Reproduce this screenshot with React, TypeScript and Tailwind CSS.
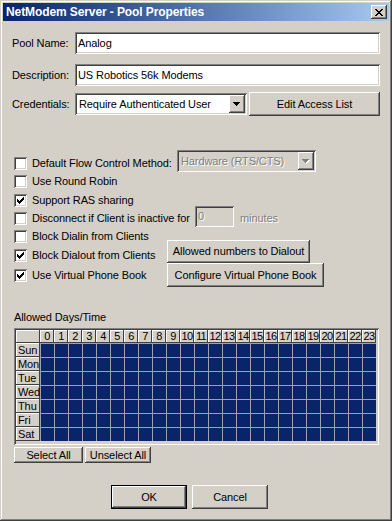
import React from "react";

const sunken =
  "shadow-[inset_1px_1px_0_#808080,inset_-1px_-1px_0_#ffffff,inset_2px_2px_0_#404040,inset_-2px_-2px_0_#d4d0c8]";
const raised =
  "shadow-[inset_-1px_-1px_0_#404040,inset_1px_1px_0_#ffffff,inset_-2px_-2px_0_#808080,inset_2px_2px_0_#d4d0c8]";

function Check({ checked }: { checked?: boolean }) {
  return (
    <div className={`relative w-[13px] h-[13px] shrink-0 bg-white ${sunken}`}>
      {checked && (
        <svg className="absolute left-0 top-0" width="13" height="13" viewBox="0 0 13 13" shapeRendering="crispEdges">
          <path
            d="M3 5h1v3H3z M4 6h1v3H4z M5 7h1v3H5z M6 6h1v3H6z M7 5h1v3H7z M8 4h1v3H8z M9 3h1v3H9z"
            fill="#000"
          />
        </svg>
      )}
    </div>
  );
}

function Arrow({ disabled }: { disabled?: boolean }) {
  const d = "M0 0h7v1H0z M1 1h5v1H1z M2 2h3v1H2z M3 3h1v1H3z";
  return (
    <svg width="8" height="5" viewBox="0 0 8 5" shapeRendering="crispEdges">
      {disabled && <path d={d} fill="#ffffff" transform="translate(1 1)" />}
      <path d={d} fill={disabled ? "#808080" : "#000"} />
    </svg>
  );
}

function Btn({
  children,
  className = "",
}: {
  children: React.ReactNode;
  className?: string;
}) {
  return (
    <div className={`flex items-center justify-center whitespace-nowrap bg-[#d4d0c8] ${raised} ${className}`}>
      {children}
    </div>
  );
}

const hours = Array.from({ length: 24 }, (_, i) => i);
const days = ["Sun", "Mon", "Tue", "Wed", "Thu", "Fri", "Sat"];

export default function App() {
  return (
    <div
      className="w-[392px] h-[521px] bg-[#d4d0c8] p-[3px] flex flex-col text-[11px] leading-[13px] tracking-[-0.1px] text-black font-['Liberation_Sans',Arial,sans-serif] shadow-[inset_-1px_-1px_0_#404040,inset_1px_1px_0_#d4d0c8,inset_-2px_-2px_0_#808080,inset_2px_2px_0_#ffffff]"
    >
      {/* Title bar */}
      <div className="h-[18px] flex items-center justify-between pl-[3px] pr-[2px] bg-linear-to-r from-[#0a246a] to-[#a6caf0]">
        <span className="text-white font-bold text-[12px] tracking-[-0.1px]">
          NetModem Server - Pool Properties
        </span>
        <div className={`w-[16px] h-[14px] flex items-center justify-center bg-[#d4d0c8] ${raised}`}>
          <svg width="8" height="7" viewBox="0 0 8 7" shapeRendering="crispEdges">
            <path
              d="M0 0h2v1H0z M6 0h2v1H6z M1 1h2v1H1z M5 1h2v1H5z M2 2h4v1H2z M3 3h2v1H3z M2 4h4v1H2z M1 5h2v1H1z M5 5h2v1H5z M0 6h2v1H0z M6 6h2v1H6z"
              fill="#000"
            />
          </svg>
        </div>
      </div>

      <div className="flex flex-col pl-[9px]">
        {/* Pool name */}
        <div className="mt-[11px] flex items-center h-[22px]">
          <span className="w-[63px]">Pool Name:</span>
          <div className={`w-[305px] h-[22px] bg-white flex items-center pl-[3px] ${sunken}`}>Analog</div>
        </div>
        {/* Description */}
        <div className="mt-[10px] flex items-center h-[22px]">
          <span className="w-[63px]">Description:</span>
          <div className={`w-[305px] h-[22px] bg-white flex items-center pl-[3px] ${sunken}`}>
            US Robotics 56k Modems
          </div>
        </div>
        {/* Credentials */}
        <div className="mt-[6px] flex items-center h-[24px]">
          <span className="w-[63px]">Credentials:</span>
          <div className={`w-[172px] h-[22px] bg-white flex items-center p-[2px] ${sunken}`}>
            <span className="flex-1 pl-[2px] whitespace-nowrap overflow-hidden">Require Authenticated User</span>
            <div className={`w-[16px] h-[18px] shrink-0 flex items-center justify-center bg-[#d4d0c8] ${raised}`}>
              <Arrow />
            </div>
          </div>
          <Btn className="ml-[2px] w-[131px] h-[24px]">Edit Access List</Btn>
        </div>

        {/* Options */}
        <div className="mt-[38px] flex flex-col pl-[2px]">
          <div className="h-[18px] flex items-center">
            <Check />
            <span className="ml-[5px] w-[145px] whitespace-nowrap">Default Flow Control Method:</span>
            <div className={`self-start mt-[-4px] w-[139px] h-[22px] bg-[#d4d0c8] flex items-center p-[2px] ${sunken}`}>
              <span className="flex-1 pl-[2px] whitespace-nowrap text-[#808080] [text-shadow:1px_1px_0_#ffffff]">Hardware (RTS/CTS)</span>
              <div className={`w-[16px] h-[18px] shrink-0 flex items-center justify-center bg-[#d4d0c8] ${raised}`}>
                <Arrow disabled />
              </div>
            </div>
          </div>
          <div className="h-[19px] flex items-center">
            <Check />
            <span className="ml-[5px]">Use Round Robin</span>
          </div>
          <div className="h-[18px] flex items-center">
            <Check checked />
            <span className="ml-[5px]">Support RAS sharing</span>
          </div>
          <div className="h-[19px] flex items-center">
            <Check />
            <span className="ml-[5px] w-[163px] whitespace-nowrap">Disconnect if Client is inactive for</span>
            <div className={`self-start mt-[-3px] w-[39px] h-[21px] bg-[#d4d0c8] flex items-center pl-[3px] text-[#808080] [text-shadow:1px_1px_0_#ffffff] ${sunken}`}>
              0
            </div>
            <span className="ml-[6px] text-[#808080] [text-shadow:1px_1px_0_#ffffff]">minutes</span>
          </div>
          <div className="flex">
            <div className="w-[153px] flex flex-col">
              <div className="h-[17px] flex items-center">
                <Check />
                <span className="ml-[5px] whitespace-nowrap">Block Dialin from Clients</span>
              </div>
              <div className="h-[21px] flex items-center">
                <Check checked />
                <span className="ml-[5px] whitespace-nowrap">Block Dialout from Clients</span>
              </div>
              <div className="h-[18px] flex items-center">
                <Check checked />
                <span className="ml-[5px] whitespace-nowrap">Use Virtual Phone Book</span>
              </div>
            </div>
            <div className="flex flex-col items-start pt-[12px]">
              <Btn className="w-[143px] h-[23px]">Allowed numbers to Dialout</Btn>
              <Btn className="w-[157px] h-[24px]">Configure Virtual Phone Book</Btn>
            </div>
          </div>
        </div>

        {/* Allowed days/time */}
        <div className="mt-[24px] pl-[2px] h-[13px] flex items-center">Allowed Days/Time</div>
        <div className={`mt-[4px] ml-[2px] w-[365px] h-[117px] p-[2px] bg-[#d4d0c8] ${sunken}`}>
          <div className="grid grid-cols-[24px_repeat(24,14px)] grid-rows-[13px_repeat(7,14px)]">
            <div className="bg-[#d4d0c8] shadow-[inset_-1px_-1px_0_#404040,inset_1px_1px_0_#ffffff]" />
            {hours.map((h) => (
              <div
                key={h}
                className="bg-[#d4d0c8] flex items-center justify-center text-[11px] leading-[11px] tracking-[-0.6px] shadow-[inset_-1px_-1px_0_#404040,inset_1px_1px_0_#ffffff]"
              >
                {h}
              </div>
            ))}
            {days.map((d) => (
              <React.Fragment key={d}>
                <div className="bg-[#d4d0c8] flex items-center pl-[2px] shadow-[inset_-1px_-1px_0_#404040,inset_1px_1px_0_#ffffff]">
                  {d}
                </div>
                {hours.map((h) => (
                  <div key={h} className="bg-[#0a246a] border-l border-t border-[#a0a0a8]" />
                ))}
              </React.Fragment>
            ))}
          </div>
        </div>

        <div className="mt-[2px] ml-[2px] flex">
          <Btn className="w-[69px] h-[16px]">Select All</Btn>
          <Btn className="ml-[2px] w-[66px] h-[16px]">Unselect All</Btn>
        </div>

        <div className="mt-[22px] ml-[99px] flex">
          <div className="w-[76px] h-[24px] border border-black">
            <Btn className="w-full h-full">OK</Btn>
          </div>
          <Btn className="ml-[5px] w-[76px] h-[24px]">Cancel</Btn>
        </div>
      </div>
    </div>
  );
}
